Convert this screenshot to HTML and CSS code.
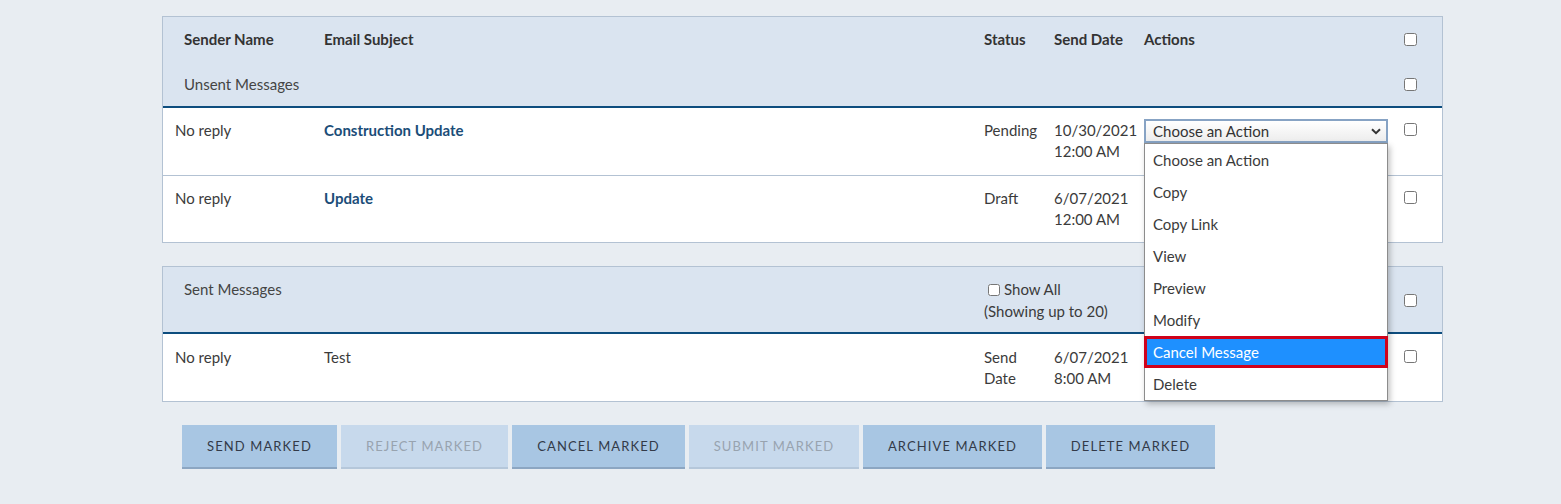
FILE: index.html
```html
<!DOCTYPE html>
<html lang="en">
<head>
<meta charset="utf-8">
<title>Messages</title>
<link rel="stylesheet" href="styles.css">
</head>
<body>
<div class="page">
  <section class="panel">
    <div class="head">
      <div class="row hrow">
        <div class="c-sender th">Sender Name</div>
        <div class="th">Email Subject</div>
        <div class="th">Status</div>
        <div class="th">Send Date</div>
        <div class="th">Actions</div>
        <div class="c-check"><input type="checkbox" class="cb"></div>
      </div>
      <div class="row hrow">
        <div class="c-sender group">Unsent Messages</div>
        <div></div><div></div><div></div><div></div>
        <div class="c-check"><input type="checkbox" class="cb"></div>
      </div>
    </div>
    <div class="row drow first">
      <div>No reply</div>
      <div class="subject">Construction Update</div>
      <div>Pending</div>
      <div>10/30/2021<br>12:00 AM</div>
      <div class="actions">
        <div class="select">
          <span>Choose an Action</span>
          <svg class="chev" width="10" height="7" viewBox="0 0 10 7"><path d="M1 1.2 L5 5.2 L9 1.2" fill="none" stroke="#333" stroke-width="2"/></svg>
          <ul class="menu">
            <li>Choose an Action</li>
            <li>Copy</li>
            <li>Copy Link</li>
            <li>View</li>
            <li>Preview</li>
            <li>Modify</li>
            <li class="active">Cancel Message</li>
            <li>Delete</li>
          </ul>
        </div>
      </div>
      <div class="c-check top"><input type="checkbox" class="cb"></div>
    </div>
    <div class="row drow last">
      <div>No reply</div>
      <div class="subject">Update</div>
      <div>Draft</div>
      <div>6/07/2021<br>12:00 AM</div>
      <div></div>
      <div class="c-check top"><input type="checkbox" class="cb"></div>
    </div>
  </section>

  <section class="panel">
    <div class="head">
      <div class="row hrow tall">
        <div class="c-sender group">Sent Messages</div>
        <div></div>
        <div class="showall"><label><input type="checkbox" class="cb-inline">Show All</label><br>(Showing up to 20)</div>
        <div></div>
        <div class="c-check mid"><input type="checkbox" class="cb"></div>
      </div>
    </div>
    <div class="row drow sent">
      <div>No reply</div>
      <div>Test</div>
      <div>Send<br>Date</div>
      <div>6/07/2021<br>8:00 AM</div>
      <div></div>
      <div class="c-check top"><input type="checkbox" class="cb"></div>
    </div>
  </section>

  <div class="buttons">
    <button class="btn w-send">SEND MARKED</button>
    <button class="btn disabled w-reject">REJECT MARKED</button>
    <button class="btn w-cancel">CANCEL MARKED</button>
    <button class="btn disabled w-submit">SUBMIT MARKED</button>
    <button class="btn w-archive">ARCHIVE MARKED</button>
    <button class="btn w-delete">DELETE MARKED</button>
  </div>
</div>
</body>
</html>
```

FILE: styles.css
```css
* { box-sizing: border-box; }
html, body { margin: 0; padding: 0; }
body {
  background: #e8edf2;
  font-family: Lato, "Noto Sans", sans-serif;
  font-size: 15px;
  color: #3b3b3b;
  width: 1561px;
  height: 504px;
  overflow: hidden;
}
.page {
  padding: 16px 0 0 162px;
}
.panel {
  width: 1281px;
  background: #fff;
  border: 1px solid #b3c2d3;
  margin-bottom: 23px;
}
.head {
  background: #dae4f0;
  border-bottom: 2px solid #0d4d7e;
}
.row {
  display: grid;
  grid-template-columns: 149px 660px 70px 90px 260px 13px;
  padding: 0 25px 0 12px;
  line-height: 21px;
}
.hrow {
  height: 45px;
  padding-top: 12px;
}
.hrow + .hrow { height: 44px; padding-top: 12px; }
.hrow.tall { height: 65px; padding-top: 12px; }
.th { font-weight: 700; color: #333; }
.c-sender { padding-left: 9px; }
.group { color: #444; }
.c-check { display: flex; align-items: center; height: 21px; }
.c-check.top { align-items: flex-start; }
.c-check.mid { height: 42px; }
.cb {
  margin: 0;
  width: 13px;
  height: 13px;
}
.c-check.top .cb { margin-top: 3px; }
.drow {
  padding-top: 12px;
  padding-bottom: 13px;
  min-height: 67px;
  border-bottom: 1px solid #b3c2d3;
}
.drow.last { border-bottom: none; padding-bottom: 12px; min-height: 66px; }
.drow.sent { border-bottom: none; padding-top: 13px; padding-bottom: 12px; min-height: 67px; }
.subject { font-weight: 700; color: #1b4d78; }
.showall {
  grid-column: span 2;
  white-space: nowrap;
}
.showall label { display: inline-flex; align-items: center; }
.cb-inline { margin: 0 4px 0 4px; width: 12px; height: 12px; }

.actions { position: relative; }
.select {
  position: relative;
  width: 244px;
  height: 24px;
  border: 2px solid #87a3c4;
  background: linear-gradient(#ffffff, #ededed);
  display: flex;
  align-items: center;
  justify-content: space-between;
  padding: 0 5px 0 7px;
  margin-top: -1px;
  color: #333;
  line-height: 20px;
}
.chev { display: block; }
.menu {
  position: absolute;
  left: -2px;
  top: 22px;
  width: 244px;
  margin: 0;
  padding: 0;
  list-style: none;
  background: #fff;
  border: 1px solid #8c8c8c;
  box-shadow: 2px 3px 6px rgba(0,0,0,0.25);
  z-index: 5;
}
.menu li {
  height: 32px;
  line-height: 32px;
  padding-left: 8px;
  color: #3b3b3b;
}
.menu li.active {
  background: #1e90ff;
  color: #fff;
  border: 3px solid #d0021b;
  line-height: 26px;
  margin: 0 -1px;
  padding-left: 6px;
}

.buttons {
  display: flex;
  gap: 4px;
  margin-top: 1px;
  padding-left: 20px;
}
.btn {
  font-family: Lato, "Noto Sans", sans-serif;
  height: 44px;
  border: none;
  border-bottom: 2px solid #8ca6c2;
  background: #a8c6e3;
  color: #333a48;
  font-size: 13px;
  letter-spacing: 1.1px;
  padding: 0;
  text-align: center;
}
.btn.disabled {
  background: #c7d9ec;
  color: #98a3af;
  border-bottom-color: #b5c7da;
}
.w-send { width: 155px; }
.w-reject { width: 167px; }
.w-cancel { width: 173px; }
.w-submit { width: 170px; }
.w-archive { width: 179px; }
.w-delete { width: 169px; }
```
